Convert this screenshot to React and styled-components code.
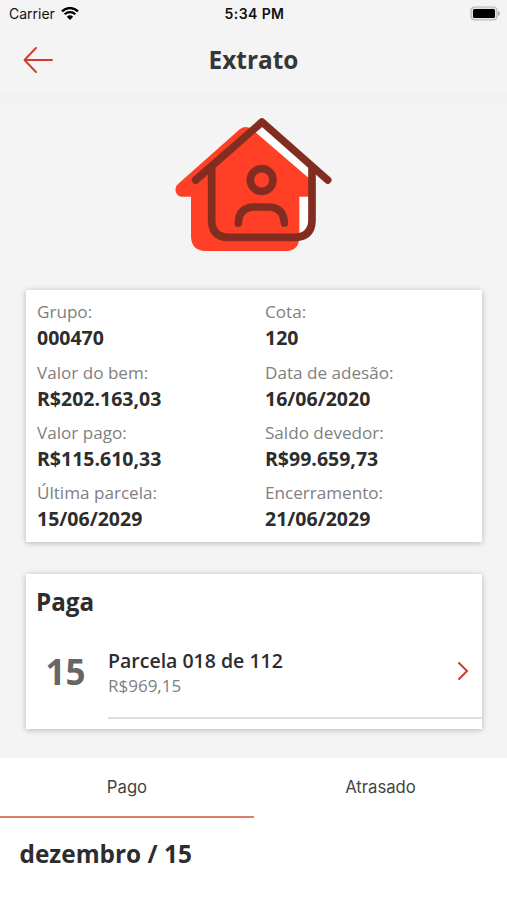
import React, { useState } from "react";
import styled, { createGlobalStyle } from "styled-components";

const GlobalStyle = createGlobalStyle`
  * {
    box-sizing: border-box;
  }
  body {
    margin: 0;
    background: #f4f4f4;
    font-family: "Open Sans", sans-serif;
    color: #2d2d2d;
  }
  h1, h2, p {
    margin: 0;
  }
`;

const Screen = styled.div`
  display: flex;
  flex-direction: column;
  width: 507px;
  height: 900px;
  overflow: hidden;
`;

const StatusBar = styled.div`
  display: grid;
  grid-template-columns: 1fr auto 1fr;
  align-items: center;
  height: 27px;
  padding: 0 7px 0 9px;
  font-family: Inter, sans-serif;
  color: #111;
`;

const Carrier = styled.div`
  display: flex;
  align-items: center;
  gap: 6px;
  font-size: 14px;
`;

const Clock = styled.span`
  font-size: 14px;
  font-weight: 600;
  letter-spacing: 0.4px;
`;

const BatteryIcon = styled.svg`
  justify-self: end;
`;

const Header = styled.header`
  display: grid;
  grid-template-columns: 60px 1fr 60px;
  align-items: center;
  height: 65px;
`;

const BackButton = styled.button`
  display: flex;
  padding: 0 0 0 22px;
  border: 0;
  background: none;
`;

const Title = styled.h1`
  font-size: 24.4px;
  line-height: 32px;
  font-weight: 700;
  text-align: center;
  color: #363636;
`;

const Divider = styled.div`
  height: 12px;
  background: #f1f1f1;
`;

const Hero = styled.div`
  display: flex;
  height: 186px;
  padding: 1px 0 0 165px;
`;

const Card = styled.section`
  width: 456px;
  height: ${({ $height }) => $height}px;
  margin: 0 0 ${({ $gap }) => $gap}px 26px;
  flex-shrink: 0;
  background: #fff;
  box-shadow: 0 1px 6px rgba(0, 0, 0, 0.26);
`;

const InfoGrid = styled.div`
  display: grid;
  grid-template-columns: 228px 1fr;
  grid-auto-rows: 60.2px;
  padding: 9.4px 0 0 11px;
`;

const Label = styled.p`
  font-size: 17.1px;
  line-height: 26px;
  font-weight: 400;
  color: #808080;
`;

const Value = styled.p`
  font-size: 19.5px;
  line-height: 26px;
  font-weight: 700;
`;

const CardTitle = styled.h2`
  padding: 11px 0 0 10px;
  font-size: 24.2px;
  line-height: 34px;
  font-weight: 700;
`;

const Installment = styled.div`
  display: flex;
  height: 100px;
`;

const Day = styled.div`
  width: 82px;
  padding: 32px 0 0 19.5px;
  font-size: 35px;
  line-height: 42px;
  font-weight: 700;
  color: #666;
`;

const Details = styled.div`
  display: flex;
  flex: 1;
  justify-content: space-between;
  padding: 29px 13px 0 0;
  border-bottom: 2px solid #dedede;
`;

const Name = styled.p`
  font-size: 19.5px;
  line-height: 26px;
  font-weight: 600;
`;

const Amount = styled.p`
  font-size: 17px;
  line-height: 24px;
  font-weight: 400;
  color: #808080;
`;

const Chevron = styled.svg`
  margin-top: 13px;
`;

const Panel = styled.div`
  flex: 1;
  background: #fff;
`;

const Tabs = styled.div`
  display: grid;
  grid-template-columns: 254px 1fr;
  height: 60px;
`;

const Tab = styled.button`
  padding: 0;
  border: 0;
  border-bottom: 2px solid ${({ $active }) => ($active ? "#dc7d69" : "transparent")};
  background: none;
  font-family: Inter, sans-serif;
  font-size: 16.7px;
  color: #444;
`;

const Month = styled.h2`
  padding: 19px 0 0 19.5px;
  font-size: 24.4px;
  line-height: 34px;
  font-weight: 700;
`;

const info = [
  { label: "Grupo:", value: "000470" },
  { label: "Cota:", value: "120" },
  { label: "Valor do bem:", value: "R$202.163,03" },
  { label: "Data de adesão:", value: "16/06/2020" },
  { label: "Valor pago:", value: "R$115.610,33" },
  { label: "Saldo devedor:", value: "R$99.659,73" },
  { label: "Última parcela:", value: "15/06/2029" },
  { label: "Encerramento:", value: "21/06/2029" },
];

const tabs = ["Pago", "Atrasado"];

const Wifi = () => (
  <svg width="18" height="14" viewBox="0 0 54 42" fill="none" stroke="#000">
    <path d="M3 13 A34 34 0 0 1 51 13" strokeWidth="7" />
    <path d="M11 22 A23 23 0 0 1 43 22" strokeWidth="6.5" />
    <path d="M27 39 L17.5 29.5 A14 14 0 0 1 36.5 29.5 Z" fill="#000" stroke="none" />
  </svg>
);

const Battery = () => (
  <BatteryIcon width="31" height="15" viewBox="0 0 31 15">
    <rect x="2" y="1" width="26" height="13" rx="3.6" fill="#e2e2e2" stroke="#b5b5b5" strokeWidth="1.2" />
    <rect x="4" y="3" width="22" height="9" rx="1.6" fill="#000" />
    <path d="M29 5 Q31 5.8 31 7.5 Q31 9.2 29 10 Z" fill="#aaa" />
  </BatteryIcon>
);

const House = () => (
  <svg width="180" height="160" viewBox="0 0 540 480" fill="none">
    <path d="M290 60 L440 185 V395 H290 Z" fill="#fff" />
    <path
      d="M225 72 Q242 60 260 72 L432 220 V275 H403 V398 Q401 438 360 438 H120 Q80 436 78 396 V275 H53 C32 275 24 250 40 236 Z"
      fill="#ff4027"
    />
    <g stroke="#832d20" strokeWidth="23" strokeLinecap="round" strokeLinejoin="round">
      <path d="M92 225 L291 51 L488 225" />
      <path d="M140 190 V348 Q142 397 190 397 H391 Q439 395 441 348 V190" />
      <circle cx="290" cy="225" r="34" />
      <path d="M220 354 Q222 306 269 306 H312 Q356 308 358 354" />
    </g>
  </svg>
);

const App = () => {
  const [active, setActive] = useState("Pago");

  return (
    <Screen>
      <GlobalStyle />
      <StatusBar>
        <Carrier>
          Carrier
          <Wifi />
        </Carrier>
        <Clock>5:34 PM</Clock>
        <Battery />
      </StatusBar>
      <Header>
        <BackButton aria-label="Voltar">
          <svg width="32" height="28" viewBox="0 0 32 28" fill="none" stroke="#d23a29" strokeWidth="1.9" strokeLinecap="round" strokeLinejoin="round">
            <path d="M30 14 H2.5 M14 2 L2.5 14 L14 26" />
          </svg>
        </BackButton>
        <Title>Extrato</Title>
      </Header>
      <Divider />
      <Hero>
        <House />
      </Hero>
      <Card $height={251.5} $gap={32.5}>
        <InfoGrid>
          {info.map((item) => (
            <div key={item.label}>
              <Label>{item.label}</Label>
              <Value>{item.value}</Value>
            </div>
          ))}
        </InfoGrid>
      </Card>
      <Card $height={155} $gap={29}>
        <CardTitle>Paga</CardTitle>
        <Installment>
          <Day>15</Day>
          <Details>
            <div>
              <Name>Parcela 018 de 112</Name>
              <Amount>R$969,15</Amount>
            </div>
            <Chevron width="12" height="20" viewBox="0 0 12 20" fill="none" stroke="#cf3a2c" strokeWidth="2" strokeLinecap="round">
              <path d="M2 2 L10 10 L2 18" />
            </Chevron>
          </Details>
        </Installment>
      </Card>
      <Panel>
        <Tabs>
          {tabs.map((tab) => (
            <Tab key={tab} $active={tab === active} onClick={() => setActive(tab)}>
              {tab}
            </Tab>
          ))}
        </Tabs>
        <Month>dezembro / 15</Month>
      </Panel>
    </Screen>
  );
};

export default App;
